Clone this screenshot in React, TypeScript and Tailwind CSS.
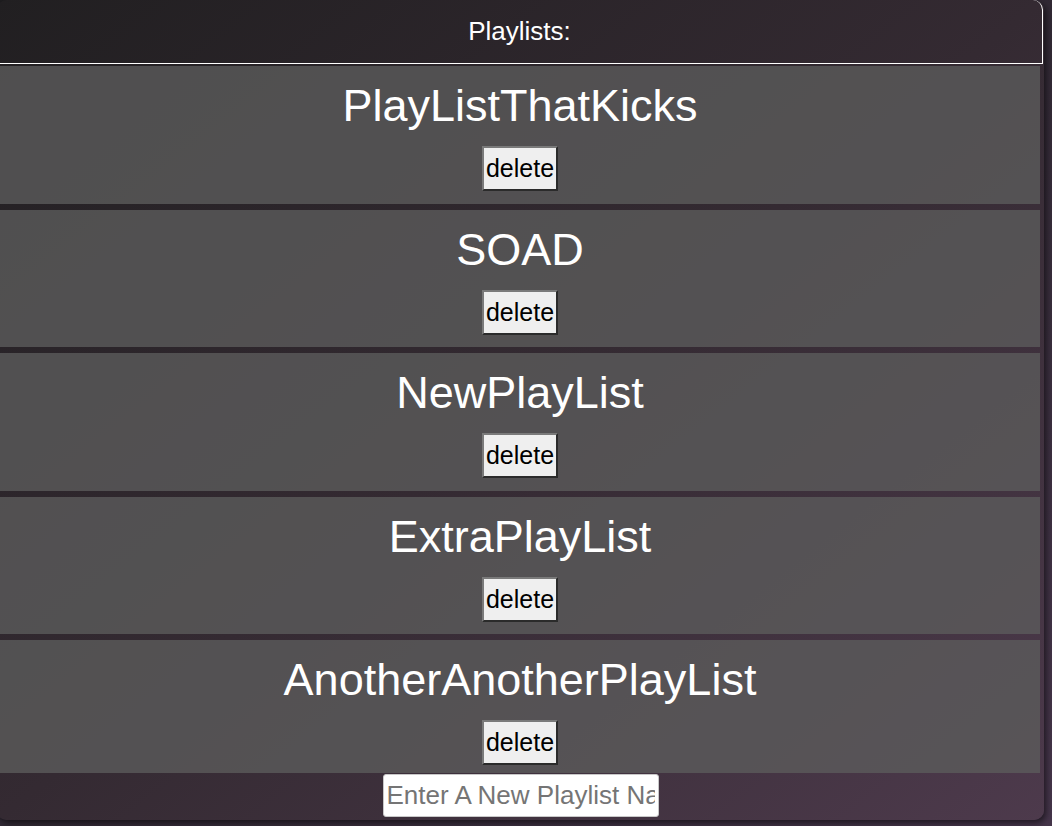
import { useState } from "react";

const PLAYLISTS = [
  "PlayListThatKicks",
  "SOAD",
  "NewPlayList",
  "ExtraPlayList",
  "AnotherAnotherPlayList",
];

function PlaylistRow({ name, onDelete }: { name: string; onDelete: () => void }) {
  return (
    <div className="h-[137.5px] shrink-0 bg-[#5b5b5b]/80 pt-[15px] flex flex-col items-center">
      <h2 className="text-[45px] leading-[50px] text-white">{name}</h2>
      <button
        type="button"
        onClick={onDelete}
        className="mt-[15px] h-[45px] px-[2px] text-[25px] leading-none text-black bg-[#efefef] border-2 border-t-[#7a7a7a] border-l-[#7a7a7a] border-b-[#2b2b2b] border-r-[#2b2b2b]"
      >
        delete
      </button>
    </div>
  );
}

export default function App() {
  const [lists, setLists] = useState(PLAYLISTS);
  const [draft, setDraft] = useState("");

  return (
    <div className="min-h-screen w-full overflow-hidden bg-gradient-to-br from-[#1e1d1f] to-[#45354a] font-['Liberation_Sans',Arial,sans-serif]">
      <div className="ml-[-3px] w-[1047px] h-[820px] rounded-[10px] bg-gradient-to-br from-[#211f21] via-[#342a32] to-[#4d3a4c] shadow-[2px_3px_6px_rgba(0,0,0,0.55)] flex flex-col">
        <header className="h-[64px] shrink-0 mr-[1px] border-r border-b border-white rounded-tr-[10px] flex items-center justify-center text-white text-[26px]">
          Playlists:
        </header>
        <div className="mt-[2px] ml-[3px] mr-[4px] h-[707px] shrink-0 overflow-hidden flex flex-col gap-[6px]">
          {lists.map((name) => (
            <PlaylistRow
              key={name}
              name={name}
              onDelete={() => setLists((prev) => prev.filter((n) => n !== name))}
            />
          ))}
        </div>
        <div className="mt-[1px] flex justify-center">
          <input
            value={draft}
            onChange={(e) => setDraft(e.target.value)}
            onKeyDown={(e) => {
              if (e.key === "Enter" && draft.trim()) {
                setLists((prev) => [...prev, draft.trim()]);
                setDraft("");
              }
            }}
            placeholder="Enter A New Playlist Name"
            className="w-[276px] h-[43px] px-[3px] bg-white text-[26px] text-black placeholder:text-[#757575] border border-[#c8c8c8] rounded-[3px] outline-none"
          />
        </div>
      </div>
    </div>
  );
}
